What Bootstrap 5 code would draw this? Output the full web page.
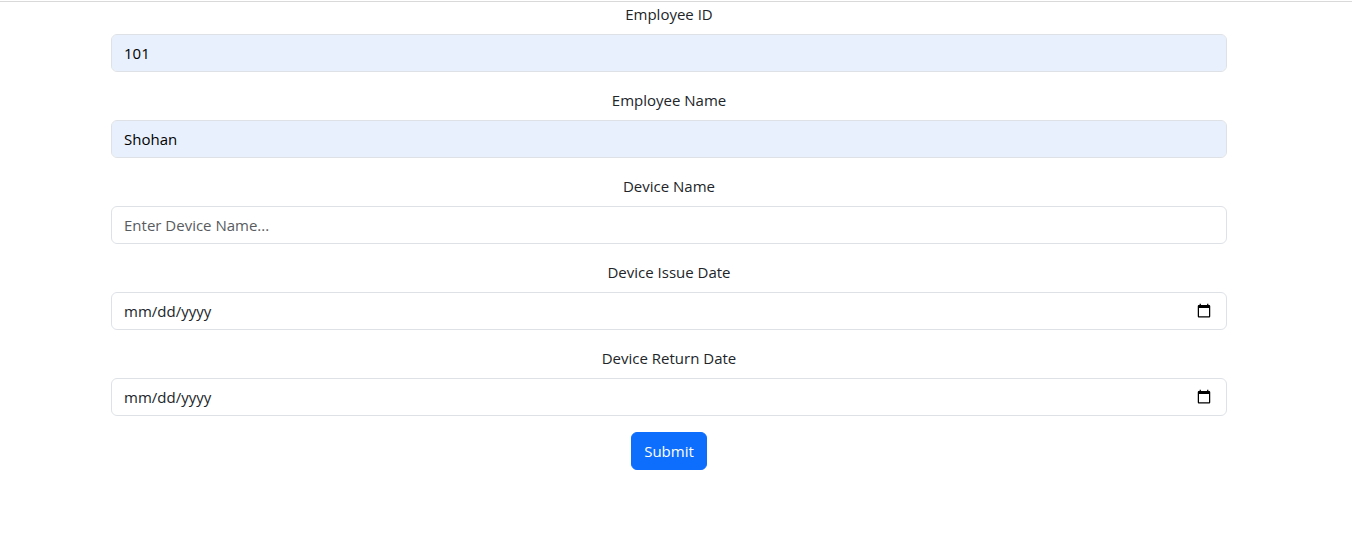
<!DOCTYPE html>
<html lang="en">
<head>
<meta charset="utf-8">
<meta name="viewport" content="width=device-width, initial-scale=1">
<title>Device Issue Form</title>
<link href="https://cdn.jsdelivr.net/npm/bootstrap@5.3.0/dist/css/bootstrap.min.css" rel="stylesheet">
<style>
  body { font-family: "Segoe UI", "Open Sans", "Noto Sans", sans-serif; font-size: 15px; }
  .page { padding-top: 1px; padding-right: 14px; }
  .rule { border-top: 1px solid #d9d9d9; margin-right: -14px; }
  .form-label { line-height: 24px; }
  .form-control { font-size: 15px; line-height: 24px; height: 38px; border-color: #dee2e6; }
  .form-control::placeholder { color: #595c5f; }
  .form-control::-webkit-calendar-picker-indicator { width: 16px; height: 16px; }
  .filled { background-color: #e8f0fe; color: #000; }
  .btn { font-size: 15px; line-height: 24px; }
</style>
</head>
<body>
<main class="page text-center">
  <div class="rule"></div>
  <form class="container">
    <div class="mb-3">
      <label class="form-label" for="employeeId">Employee ID</label>
      <input class="form-control filled" type="text" id="employeeId" value="101">
    </div>
    <div class="mb-3">
      <label class="form-label" for="employeeName">Employee Name</label>
      <input class="form-control filled" type="text" id="employeeName" value="Shohan">
    </div>
    <div class="mb-3">
      <label class="form-label" for="deviceName">Device Name</label>
      <input class="form-control" type="text" id="deviceName" placeholder="Enter Device Name...">
    </div>
    <div class="mb-3">
      <label class="form-label" for="issueDate">Device Issue Date</label>
      <input class="form-control" type="date" id="issueDate">
    </div>
    <div class="mb-3">
      <label class="form-label" for="returnDate">Device Return Date</label>
      <input class="form-control" type="date" id="returnDate">
    </div>
    <button class="btn btn-primary" type="submit">Submit</button>
  </form>
</main>
<script src="https://cdn.jsdelivr.net/npm/bootstrap@5.3.0/dist/js/bootstrap.bundle.min.js"></script>
</body>
</html>
